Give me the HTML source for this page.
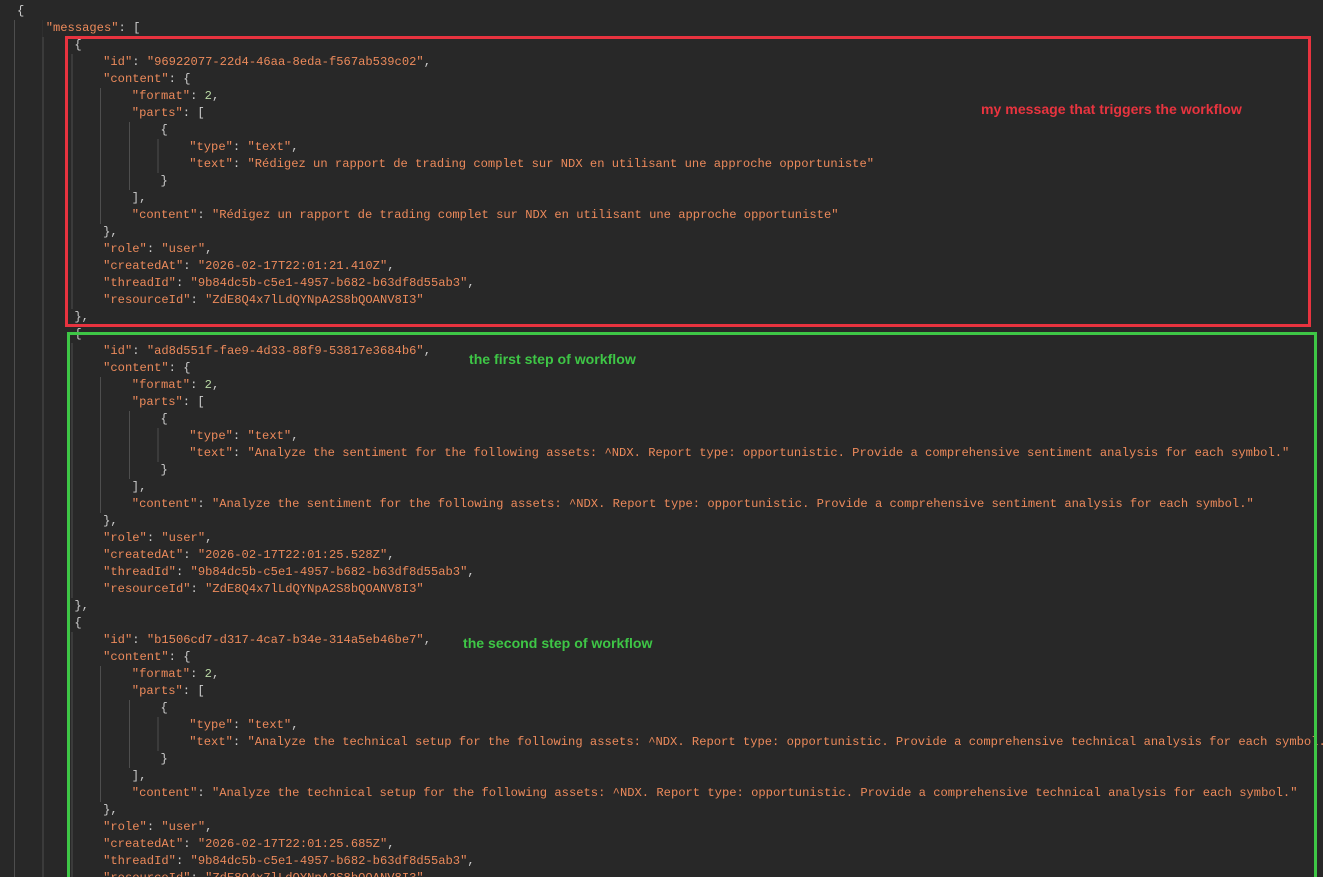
<!DOCTYPE html>
<html><head><meta charset="utf-8"><style>
html,body{margin:0;padding:0;background:#282828;width:1323px;height:877px;overflow:hidden;position:relative}
#c{padding-top:2.5px;font-family:"Liberation Mono",monospace;font-size:12.15px;color:#cccccc}
.l{white-space:pre;overflow:hidden;height:17px;line-height:17px;padding-left:calc(17px + var(--n)*28.7px);background:repeating-linear-gradient(90deg,#4e4e4e 0 1px,transparent 1px 28.7px) 14px 0/calc(var(--n)*28.7px) 100% no-repeat}
.k,.s{color:#ec8a5b}.n{color:#b8d7a3}
.box{position:absolute;box-sizing:border-box;border:3px solid}
.a{position:absolute;font-family:"Liberation Sans",sans-serif;font-weight:bold;font-size:14.1px}
</style></head><body>
<div id="c"><div class="l" style="--n:0">{</div><div class="l" style="--n:1"><span class="k">"messages"</span>: [</div><div class="l" style="--n:2">{</div><div class="l" style="--n:3"><span class="k">"id"</span>: <span class="s">"96922077-22d4-46aa-8eda-f567ab539c02"</span>,</div><div class="l" style="--n:3"><span class="k">"content"</span>: {</div><div class="l" style="--n:4"><span class="k">"format"</span>: <span class="n">2</span>,</div><div class="l" style="--n:4"><span class="k">"parts"</span>: [</div><div class="l" style="--n:5">{</div><div class="l" style="--n:6"><span class="k">"type"</span>: <span class="s">"text"</span>,</div><div class="l" style="--n:6"><span class="k">"text"</span>: <span class="s">"Rédigez un rapport de trading complet sur NDX en utilisant une approche opportuniste"</span></div><div class="l" style="--n:5">}</div><div class="l" style="--n:4">],</div><div class="l" style="--n:4"><span class="k">"content"</span>: <span class="s">"Rédigez un rapport de trading complet sur NDX en utilisant une approche opportuniste"</span></div><div class="l" style="--n:3">},</div><div class="l" style="--n:3"><span class="k">"role"</span>: <span class="s">"user"</span>,</div><div class="l" style="--n:3"><span class="k">"createdAt"</span>: <span class="s">"2026-02-17T22:01:21.410Z"</span>,</div><div class="l" style="--n:3"><span class="k">"threadId"</span>: <span class="s">"9b84dc5b-c5e1-4957-b682-b63df8d55ab3"</span>,</div><div class="l" style="--n:3"><span class="k">"resourceId"</span>: <span class="s">"ZdE8Q4x7lLdQYNpA2S8bQOANV8I3"</span></div><div class="l" style="--n:2">},</div><div class="l" style="--n:2">{</div><div class="l" style="--n:3"><span class="k">"id"</span>: <span class="s">"ad8d551f-fae9-4d33-88f9-53817e3684b6"</span>,</div><div class="l" style="--n:3"><span class="k">"content"</span>: {</div><div class="l" style="--n:4"><span class="k">"format"</span>: <span class="n">2</span>,</div><div class="l" style="--n:4"><span class="k">"parts"</span>: [</div><div class="l" style="--n:5">{</div><div class="l" style="--n:6"><span class="k">"type"</span>: <span class="s">"text"</span>,</div><div class="l" style="--n:6"><span class="k">"text"</span>: <span class="s">"Analyze the sentiment for the following assets: ^NDX. Report type: opportunistic. Provide a comprehensive sentiment analysis for each symbol."</span></div><div class="l" style="--n:5">}</div><div class="l" style="--n:4">],</div><div class="l" style="--n:4"><span class="k">"content"</span>: <span class="s">"Analyze the sentiment for the following assets: ^NDX. Report type: opportunistic. Provide a comprehensive sentiment analysis for each symbol."</span></div><div class="l" style="--n:3">},</div><div class="l" style="--n:3"><span class="k">"role"</span>: <span class="s">"user"</span>,</div><div class="l" style="--n:3"><span class="k">"createdAt"</span>: <span class="s">"2026-02-17T22:01:25.528Z"</span>,</div><div class="l" style="--n:3"><span class="k">"threadId"</span>: <span class="s">"9b84dc5b-c5e1-4957-b682-b63df8d55ab3"</span>,</div><div class="l" style="--n:3"><span class="k">"resourceId"</span>: <span class="s">"ZdE8Q4x7lLdQYNpA2S8bQOANV8I3"</span></div><div class="l" style="--n:2">},</div><div class="l" style="--n:2">{</div><div class="l" style="--n:3"><span class="k">"id"</span>: <span class="s">"b1506cd7-d317-4ca7-b34e-314a5eb46be7"</span>,</div><div class="l" style="--n:3"><span class="k">"content"</span>: {</div><div class="l" style="--n:4"><span class="k">"format"</span>: <span class="n">2</span>,</div><div class="l" style="--n:4"><span class="k">"parts"</span>: [</div><div class="l" style="--n:5">{</div><div class="l" style="--n:6"><span class="k">"type"</span>: <span class="s">"text"</span>,</div><div class="l" style="--n:6"><span class="k">"text"</span>: <span class="s">"Analyze the technical setup for the following assets: ^NDX. Report type: opportunistic. Provide a comprehensive technical analysis for each symbol."</span></div><div class="l" style="--n:5">}</div><div class="l" style="--n:4">],</div><div class="l" style="--n:4"><span class="k">"content"</span>: <span class="s">"Analyze the technical setup for the following assets: ^NDX. Report type: opportunistic. Provide a comprehensive technical analysis for each symbol."</span></div><div class="l" style="--n:3">},</div><div class="l" style="--n:3"><span class="k">"role"</span>: <span class="s">"user"</span>,</div><div class="l" style="--n:3"><span class="k">"createdAt"</span>: <span class="s">"2026-02-17T22:01:25.685Z"</span>,</div><div class="l" style="--n:3"><span class="k">"threadId"</span>: <span class="s">"9b84dc5b-c5e1-4957-b682-b63df8d55ab3"</span>,</div><div class="l" style="--n:3"><span class="k">"resourceId"</span>: <span class="s">"ZdE8Q4x7lLdQYNpA2S8bQOANV8I3"</span></div></div>
<div class="box" style="left:65px;top:36px;width:1246px;height:291px;border-color:#e8333f"></div>
<div class="box" style="left:67px;top:332px;width:1250px;height:560px;border-color:#3ec646"></div>
<div class="a" style="left:981px;top:101px;color:#e8343f">my message that triggers the workflow</div>
<div class="a" style="left:469px;top:351px;color:#3ec646">the first step of workflow</div>
<div class="a" style="left:463px;top:635px;color:#3ec646">the second step of workflow</div>
</body></html>
